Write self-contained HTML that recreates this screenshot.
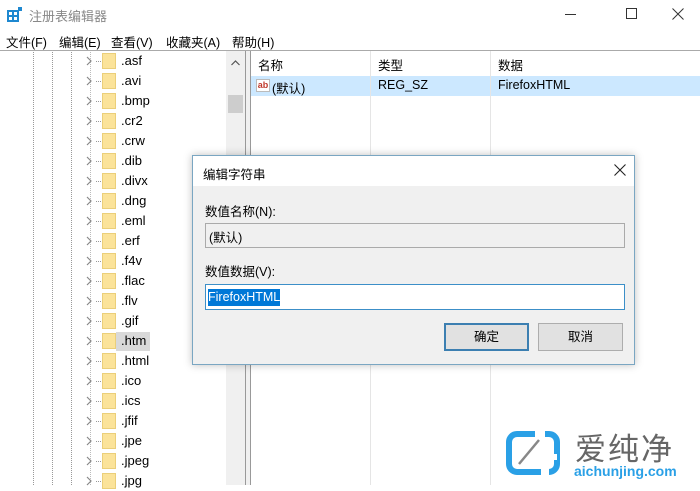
<!DOCTYPE html><html><head><meta charset="utf-8"><style>
*{margin:0;padding:0;box-sizing:border-box}
body{width:700px;height:485px;overflow:hidden;background:#fff;font-family:"Liberation Sans","Noto Sans CJK SC",sans-serif;font-size:12px;color:#000;position:relative}
.a{position:absolute;white-space:nowrap}
.vd{position:absolute;top:52px;height:433px;border-left:1px dotted #999}
.row{position:absolute;left:84px;height:20px;width:150px}
.row .ch{position:absolute;left:2px;top:5px;width:6px;height:10px}
.row .ds{position:absolute;left:12px;top:10px;width:5px;border-top:1px dotted #999}
.row .fd{position:absolute;left:18px;top:2px;width:14px;height:16px;background:#fbe39a;border:1px solid #ebcf7a}
.row .t{position:absolute;left:37px;top:2px;font-size:13px}
</style></head><body>
<svg width="0" height="0" style="position:absolute"><defs><symbol id="c" viewBox="0 0 6 10"><path d="M1 1 L5 5 L1 9" fill="none" stroke="#888" stroke-width="1.2"/></symbol></defs></svg>
<!-- title -->
<svg class="a" style="left:7px;top:7px" width="16" height="16"><rect x="0" y="3" width="12" height="12" fill="#1e88d0"/><g fill="#fff"><rect x="2" y="5" width="3" height="3"/><rect x="7" y="5" width="3" height="3"/><rect x="2" y="10" width="3" height="3"/><rect x="7" y="10" width="3" height="3"/></g><rect x="11" y="0" width="4" height="4" fill="#1e88d0"/></svg>
<div class="a" style="left:29px;top:6px;font-size:13px;color:#888">注册表编辑器</div>
<div class="a" style="left:565px;top:14px;width:11px;border-top:1px solid #333"></div>
<div class="a" style="left:626px;top:8px;width:11px;height:11px;border:1px solid #333"></div>
<svg class="a" style="left:672px;top:8px" width="12" height="12"><path d="M0.5 0.5 L11.5 11.5 M11.5 0.5 L0.5 11.5" stroke="#333" stroke-width="1"/></svg>
<!-- menu -->
<div class="a" style="left:6px;top:32px;font-size:12.5px">文件(F)</div>
<div class="a" style="left:59px;top:32px;font-size:12.5px">编辑(E)</div>
<div class="a" style="left:111px;top:32px;font-size:12.5px">查看(V)</div>
<div class="a" style="left:166px;top:32px;font-size:12.5px">收藏夹(A)</div>
<div class="a" style="left:232px;top:32px;font-size:12.5px">帮助(H)</div>
<div class="a" style="left:0;top:50px;width:700px;border-top:1px solid #aaa"></div>
<!-- tree -->
<div class="vd" style="left:33px"></div><div class="vd" style="left:52px"></div><div class="vd" style="left:71px"></div>
<div class="a" style="left:90px;top:52px;height:433px;border-left:1px dotted #bbb"></div>
<div class="a" style="left:226px;top:51px;width:19px;height:434px;background:#f0f0f0"></div>
<svg class="a" style="left:231px;top:60px" width="9" height="6"><path d="M0.5 5 L4.5 1 L8.5 5" fill="none" stroke="#555" stroke-width="1.2"/></svg>
<div class="a" style="left:228px;top:95px;width:15px;height:18px;background:#cdcdcd"></div>
<div class="a" style="left:245px;top:51px;width:6px;height:434px;border-left:1px solid #999;border-right:1px solid #999;background:#f0f0f0"></div>
<div class="a" style="left:116px;top:332px;width:34px;height:19px;background:#d9d9d9"></div>
<div class="row" style="top:51px"><svg class="ch"><use href="#c"/></svg><span class="ds"></span><span class="fd"></span><span class="t">.asf</span></div>
<div class="row" style="top:71px"><svg class="ch"><use href="#c"/></svg><span class="ds"></span><span class="fd"></span><span class="t">.avi</span></div>
<div class="row" style="top:91px"><svg class="ch"><use href="#c"/></svg><span class="ds"></span><span class="fd"></span><span class="t">.bmp</span></div>
<div class="row" style="top:111px"><svg class="ch"><use href="#c"/></svg><span class="ds"></span><span class="fd"></span><span class="t">.cr2</span></div>
<div class="row" style="top:131px"><svg class="ch"><use href="#c"/></svg><span class="ds"></span><span class="fd"></span><span class="t">.crw</span></div>
<div class="row" style="top:151px"><svg class="ch"><use href="#c"/></svg><span class="ds"></span><span class="fd"></span><span class="t">.dib</span></div>
<div class="row" style="top:171px"><svg class="ch"><use href="#c"/></svg><span class="ds"></span><span class="fd"></span><span class="t">.divx</span></div>
<div class="row" style="top:191px"><svg class="ch"><use href="#c"/></svg><span class="ds"></span><span class="fd"></span><span class="t">.dng</span></div>
<div class="row" style="top:211px"><svg class="ch"><use href="#c"/></svg><span class="ds"></span><span class="fd"></span><span class="t">.eml</span></div>
<div class="row" style="top:231px"><svg class="ch"><use href="#c"/></svg><span class="ds"></span><span class="fd"></span><span class="t">.erf</span></div>
<div class="row" style="top:251px"><svg class="ch"><use href="#c"/></svg><span class="ds"></span><span class="fd"></span><span class="t">.f4v</span></div>
<div class="row" style="top:271px"><svg class="ch"><use href="#c"/></svg><span class="ds"></span><span class="fd"></span><span class="t">.flac</span></div>
<div class="row" style="top:291px"><svg class="ch"><use href="#c"/></svg><span class="ds"></span><span class="fd"></span><span class="t">.flv</span></div>
<div class="row" style="top:311px"><svg class="ch"><use href="#c"/></svg><span class="ds"></span><span class="fd"></span><span class="t">.gif</span></div>
<div class="row" style="top:331px"><svg class="ch"><use href="#c"/></svg><span class="ds"></span><span class="fd"></span><span class="t">.htm</span></div>
<div class="row" style="top:351px"><svg class="ch"><use href="#c"/></svg><span class="ds"></span><span class="fd"></span><span class="t">.html</span></div>
<div class="row" style="top:371px"><svg class="ch"><use href="#c"/></svg><span class="ds"></span><span class="fd"></span><span class="t">.ico</span></div>
<div class="row" style="top:391px"><svg class="ch"><use href="#c"/></svg><span class="ds"></span><span class="fd"></span><span class="t">.ics</span></div>
<div class="row" style="top:411px"><svg class="ch"><use href="#c"/></svg><span class="ds"></span><span class="fd"></span><span class="t">.jfif</span></div>
<div class="row" style="top:431px"><svg class="ch"><use href="#c"/></svg><span class="ds"></span><span class="fd"></span><span class="t">.jpe</span></div>
<div class="row" style="top:451px"><svg class="ch"><use href="#c"/></svg><span class="ds"></span><span class="fd"></span><span class="t">.jpeg</span></div>
<div class="row" style="top:471px"><svg class="ch"><use href="#c"/></svg><span class="ds"></span><span class="fd"></span><span class="t">.jpg</span></div>
<!-- right pane -->
<div class="a" style="left:251px;top:76px;width:449px;height:20px;background:#cce8ff"></div>
<div class="a" style="left:370px;top:51px;height:434px;border-left:1px solid #e5e5e5"></div>
<div class="a" style="left:490px;top:51px;height:434px;border-left:1px solid #e5e5e5"></div>
<div class="a" style="left:258px;top:55px;font-size:12.5px">名称</div>
<div class="a" style="left:378px;top:55px;font-size:12.5px">类型</div>
<div class="a" style="left:498px;top:55px;font-size:12.5px">数据</div>
<div class="a" style="left:256px;top:79px;width:14px;height:13px;border:1px solid #bbb;background:#fff;color:#c0392b;font-size:9px;font-weight:bold;line-height:10px;text-align:center">ab</div>
<div class="a" style="left:272px;top:78px;font-size:12.5px">(默认)</div>
<div class="a" style="left:378px;top:78px;font-size:12.5px">REG_SZ</div>
<div class="a" style="left:498px;top:78px;font-size:12.5px">FirefoxHTML</div>
<!-- dialog -->
<div class="a" style="left:192px;top:155px;width:443px;height:210px;background:#f0f0f0;border:1px solid #7aa6c2;box-shadow:0 0 8px rgba(0,0,0,.25)">
<div class="a" style="left:0;top:0;width:441px;height:30px;background:#fff"></div>
<div class="a" style="left:10px;top:8px;font-size:12.5px">编辑字符串</div>
<svg class="a" style="left:421px;top:8px" width="12" height="12"><path d="M0.5 0.5 L11.5 11.5 M11.5 0.5 L0.5 11.5" stroke="#222" stroke-width="1.1"/></svg>
<div class="a" style="left:12px;top:45px;font-size:12.5px">数值名称(N):</div>
<div class="a" style="left:12px;top:67px;width:420px;height:25px;border:1px solid #aaa;background:#f0f0f0"></div>
<div class="a" style="left:16px;top:71px;font-size:12.5px">(默认)</div>
<div class="a" style="left:12px;top:105px;font-size:12.5px">数值数据(V):</div>
<div class="a" style="left:12px;top:128px;width:420px;height:26px;border:1px solid #3c8fc8;background:#fff"></div>
<div class="a" style="left:15px;top:133px;height:17px;background:#0078d7;color:#fff;font-size:12.5px;line-height:17px">FirefoxHTML</div>
<div class="a" style="left:251px;top:167px;width:85px;height:28px;border:2px solid #3c7fb1;background:#e1e1e1;text-align:center;line-height:24px;font-size:12.5px">确定</div>
<div class="a" style="left:345px;top:167px;width:85px;height:28px;border:1px solid #adadad;background:#e1e1e1;text-align:center;line-height:26px;font-size:12.5px">取消</div>
</div>
<!-- watermark -->
<svg class="a" style="left:505px;top:430px" width="56" height="46"><path d="M30 4 H12 a8 8 0 0 0 -8 8 V34 a8 8 0 0 0 8 8 H36" fill="none" stroke="#2aa0e6" stroke-width="6"/><path d="M40 4 H44 a8 8 0 0 1 8 8 V34 a8 8 0 0 1 -8 8" fill="none" stroke="#2aa0e6" stroke-width="6"/><path d="M14 34 L34 10" stroke="#888" stroke-width="2.5"/><rect x="46" y="24" width="6" height="6" fill="#fff"/></svg>
<div class="a" style="left:575px;top:424px;font-size:31px;color:#666;letter-spacing:2px">爱纯净</div>
<div class="a" style="left:574px;top:463px;font-size:14px;color:#2aa0e6;font-weight:bold">aichunjing.com</div>
</body></html>
